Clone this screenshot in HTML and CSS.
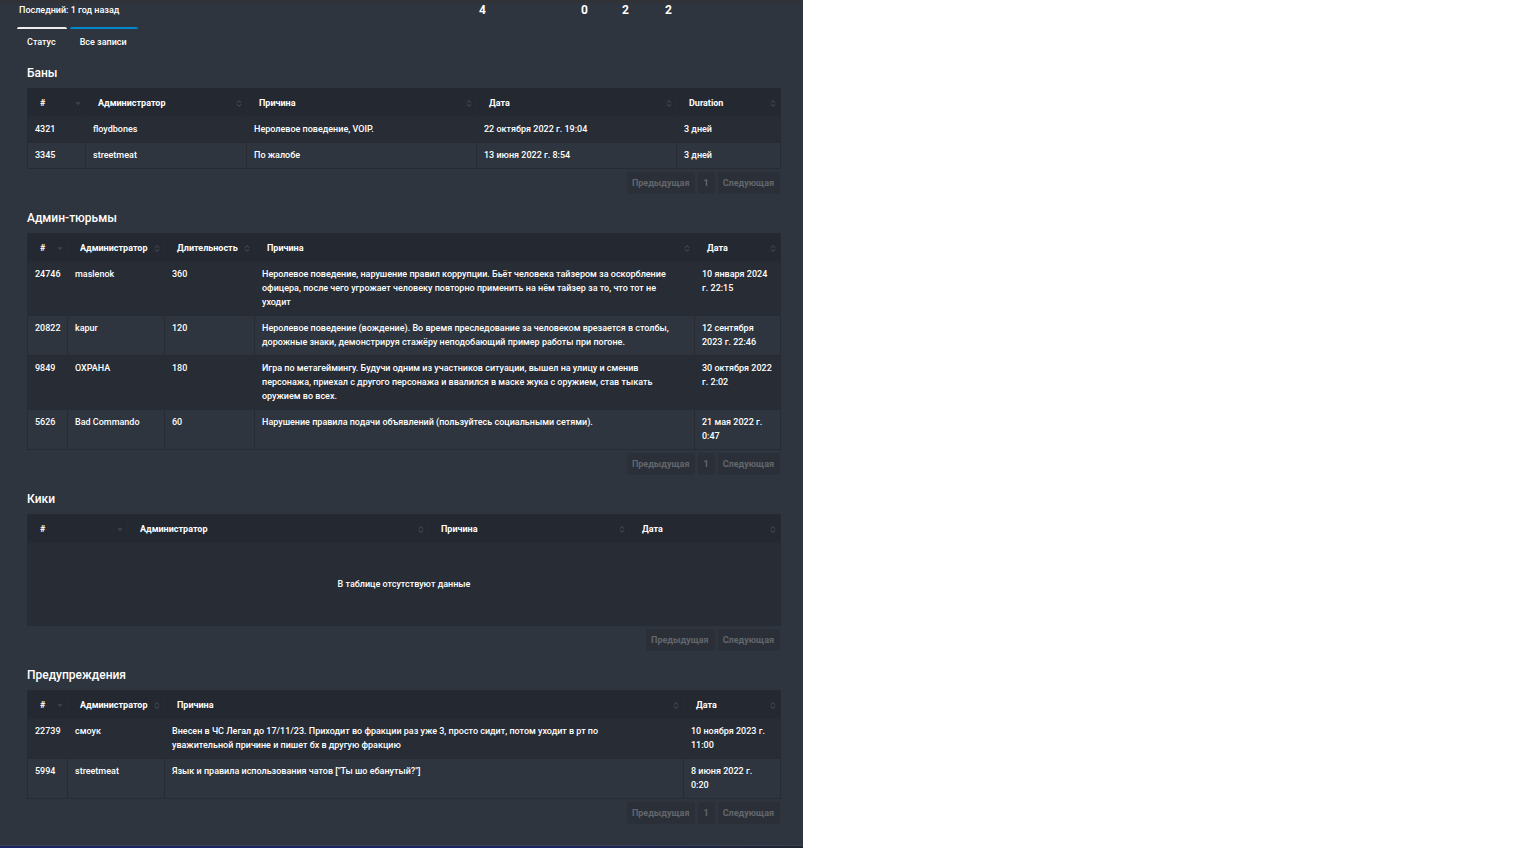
FILE: index.html
```html
<!DOCTYPE html>
<html lang="ru">
<head>
    <meta charset="UTF-8">
    <meta name="viewport" content="width=device-width, initial-scale=1.0">
    <title>Все записи</title>
    <link rel="stylesheet" href="styles.css">
</head>
<body>
    <svg class="sprite" aria-hidden="true">
        <symbol id="sort" viewBox="0 0 6 8">
            <path d="M0.5 3.2 L3 0.8 L5.5 3.2 M0.5 4.8 L3 7.2 L5.5 4.8" fill="none" stroke="currentColor" stroke-width="1.2" />
        </symbol>
        <symbol id="sort-desc" viewBox="0 0 6 8">
            <path d="M0 2.6 H6 L3 6 Z" fill="currentColor" />
        </symbol>
    </svg>

    <main class="panel">
        <header class="summary">
            <span class="last">Последний: 1 год назад</span>
            <b class="count">4</b>
            <b class="count">0</b>
            <b class="count">2</b>
            <b class="count">2</b>
        </header>

        <nav class="tabs">
            <a class="tab active" href="#status">Статус</a>
            <a class="tab" href="#records">Все записи</a>
        </nav>

        <div class="content" id="records">
            <section>
                <h2>Баны</h2>
                <table>
                    <colgroup><col class="w-58"><col class="w-161"><col><col class="w-200"><col class="w-104"></colgroup>
                    <thead>
                        <tr>
                            <th><button>#<svg><use href="#sort-desc" /></svg></button></th>
                            <th><button>Администратор<svg><use href="#sort" /></svg></button></th>
                            <th><button>Причина<svg><use href="#sort" /></svg></button></th>
                            <th><button>Дата<svg><use href="#sort" /></svg></button></th>
                            <th><button>Duration<svg><use href="#sort" /></svg></button></th>
                        </tr>
                    </thead>
                    <tbody>
                        <tr><td>4321</td><td>floydbones</td><td>Неролевое поведение, VOIP.</td><td>22 октября 2022 г. 19:04</td><td>3 дней</td></tr>
                        <tr><td>3345</td><td>streetmeat</td><td>По жалобе</td><td>13 июня 2022 г. 8:54</td><td>3 дней</td></tr>
                    </tbody>
                </table>
                <div class="pagination">
                    <button>Предыдущая</button>
                    <button>1</button>
                    <button>Следующая</button>
                </div>
            </section>

            <section>
                <h2>Админ-тюрьмы</h2>
                <table>
                    <colgroup><col class="w-40"><col class="w-97"><col class="w-90"><col><col class="w-86"></colgroup>
                    <thead>
                        <tr>
                            <th><button>#<svg><use href="#sort-desc" /></svg></button></th>
                            <th><button>Администратор<svg><use href="#sort" /></svg></button></th>
                            <th><button>Длительность<svg><use href="#sort" /></svg></button></th>
                            <th><button>Причина<svg><use href="#sort" /></svg></button></th>
                            <th><button>Дата<svg><use href="#sort" /></svg></button></th>
                        </tr>
                    </thead>
                    <tbody>
                        <tr>
                            <td>24746</td><td>maslenok</td><td>360</td>
                            <td class="reason">Неролевое поведение, нарушение правил коррупции. Бьёт человека тайзером за оскорбление офицера, после чего угрожает человеку повторно применить на нём тайзер за то, что тот не уходит</td>
                            <td>10 января 2024 г. 22:15</td>
                        </tr>
                        <tr>
                            <td>20822</td><td>kapur</td><td>120</td>
                            <td class="reason">Неролевое поведение (вождение). Во время преследование за человеком врезается в столбы, дорожные знаки, демонстрируя стажёру неподобающий пример работы при погоне.</td>
                            <td>12 сентября 2023 г. 22:46</td>
                        </tr>
                        <tr>
                            <td>9849</td><td>ОХРАНА</td><td>180</td>
                            <td class="reason">Игра по метагеймингу. Будучи одним из участников ситуации, вышел на улицу и сменив персонажа, приехал с другого персонажа и ввалился в маске жука с оружием, став тыкать оружием во всех.</td>
                            <td>30 октября 2022 г. 2:02</td>
                        </tr>
                        <tr>
                            <td>5626</td><td>Bad Commando</td><td>60</td>
                            <td class="reason">Нарушение правила подачи объявлений (пользуйтесь социальными сетями).</td>
                            <td>21 мая 2022 г. 0:47</td>
                        </tr>
                    </tbody>
                </table>
                <div class="pagination">
                    <button>Предыдущая</button>
                    <button>1</button>
                    <button>Следующая</button>
                </div>
            </section>

            <section>
                <h2>Кики</h2>
                <table>
                    <colgroup><col class="w-100"><col class="w-301"><col><col class="w-151"></colgroup>
                    <thead>
                        <tr>
                            <th><button>#<svg><use href="#sort-desc" /></svg></button></th>
                            <th><button>Администратор<svg><use href="#sort" /></svg></button></th>
                            <th><button>Причина<svg><use href="#sort" /></svg></button></th>
                            <th><button>Дата<svg><use href="#sort" /></svg></button></th>
                        </tr>
                    </thead>
                    <tbody>
                        <tr><td class="empty" colspan="4">В таблице отсутствуют данные</td></tr>
                    </tbody>
                </table>
                <div class="pagination">
                    <button>Предыдущая</button>
                    <button>Следующая</button>
                </div>
            </section>

            <section>
                <h2>Предупреждения</h2>
                <table>
                    <colgroup><col class="w-40"><col class="w-97"><col><col class="w-97"></colgroup>
                    <thead>
                        <tr>
                            <th><button>#<svg><use href="#sort-desc" /></svg></button></th>
                            <th><button>Администратор<svg><use href="#sort" /></svg></button></th>
                            <th><button>Причина<svg><use href="#sort" /></svg></button></th>
                            <th><button>Дата<svg><use href="#sort" /></svg></button></th>
                        </tr>
                    </thead>
                    <tbody>
                        <tr>
                            <td>22739</td><td>смоук</td>
                            <td class="note">Внесен в ЧС Легал до 17/11/23. Приходит во фракции раз уже 3, просто сидит, потом уходит в рт по уважительной причине и пишет бх в другую фракцию</td>
                            <td class="date">10 ноября 2023 г. 11:00</td>
                        </tr>
                        <tr>
                            <td>5994</td><td>streetmeat</td>
                            <td class="note">Язык и правила использования чатов ["Ты шо ебанутый?"]</td>
                            <td class="date">8 июня 2022 г. 0:20</td>
                        </tr>
                    </tbody>
                </table>
                <div class="pagination">
                    <button>Предыдущая</button>
                    <button>1</button>
                    <button>Следующая</button>
                </div>
            </section>
        </div>
    </main>
</body>
</html>
```
FILE: styles.css
```css
* {
    margin: 0;
    padding: 0;
    box-sizing: border-box;
}

body {
    font-family: Roboto, sans-serif;
    font-size: 9px;
    font-weight: 500;
    line-height: 14px;
    color: #fff;
    background: #fff;
}

button {
    font: inherit;
    color: inherit;
    background: none;
    border: none;
    cursor: pointer;
}

.sprite {
    display: none;
}

.panel {
    max-width: 803px;
    background: #2e353e;
    border-top: 3px solid #303236;
}

.panel::after {
    content: "";
    display: block;
    height: 2px;
    border-top: 1px solid #3a4154;
    background: linear-gradient(to right, #1c2560 70%, #20252d);
}

.summary {
    display: grid;
    grid-template-columns: 441px 102px 41px 43px 1fr;
    align-items: center;
    padding: 0 19px;
    height: 14px;
}

.count {
    font-size: 12px;
    padding-left: 19px;
}

.tabs {
    display: flex;
    gap: 3px;
    padding: 10px 17px 0;
}

.tab {
    padding: 6px 11px 5px 10px;
    border-top: 2px solid #0088cc;
    border-radius: 2px 2px 0 0;
    color: #fff;
    text-decoration: none;
}

.tab.active {
    border-color: #eee;
}

.content {
    padding: 10px 22px 6px 27px;
}

h2 {
    font-size: 12px;
    font-weight: 500;
    line-height: 18px;
    margin-bottom: 6px;
}

table {
    width: 100%;
    table-layout: fixed;
    border-collapse: collapse;
}

th,
td {
    border: 1px solid #272b34;
    text-align: left;
    vertical-align: top;
}

th {
    background: #242830;
    border-color: #262a32;
}

th button {
    display: flex;
    align-items: center;
    justify-content: space-between;
    width: 100%;
    padding: 7px 4px 6px 12px;
    font-weight: 700;
    white-space: nowrap;
}

th svg {
    flex: none;
    width: 6px;
    height: 7px;
    color: #41444a;
}

td {
    padding: 5px 6px 6px 7px;
}

tbody tr:nth-child(odd) {
    background: #282c35;
}

.reason {
    padding-right: 14px;
}

.note {
    padding-right: 60px;
}

.date {
    padding-right: 14px;
}

.empty {
    padding: 34px 7px;
    text-align: center;
}

.w-40 { width: 40px; }
.w-58 { width: 58px; }
.w-86 { width: 86px; }
.w-90 { width: 90px; }
.w-97 { width: 97px; }
.w-100 { width: 100px; }
.w-104 { width: 104px; }
.w-151 { width: 151px; }
.w-161 { width: 161px; }
.w-200 { width: 200px; }
.w-301 { width: 301px; }

.pagination {
    display: flex;
    justify-content: flex-end;
    gap: 3px;
    margin: 3px 1px 15px 0;
}

.pagination button {
    padding: 4px 6px 4px 5px;
    border-radius: 2px;
    background: #2b3038;
    color: #62676d;
    font-weight: 700;
}
```
